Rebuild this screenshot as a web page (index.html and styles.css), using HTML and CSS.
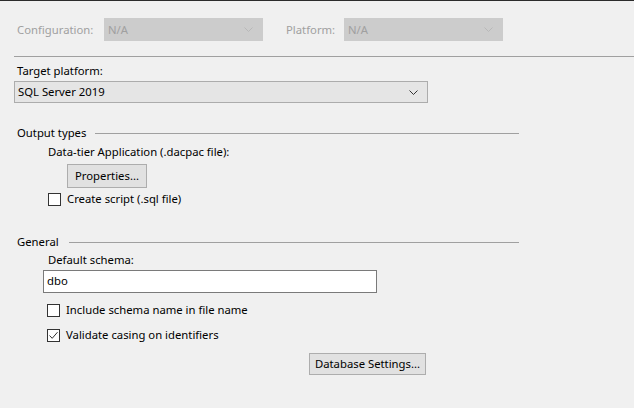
FILE: index.html
```html
<!DOCTYPE html>
<html>
<head>
<meta charset="utf-8">
<link rel="stylesheet" href="styles.css">
</head>
<body>
<div class="page">
  <div class="toprow">
    <span class="dlabel cfg-label">Configuration:</span>
    <div class="combo disabled cfg-combo"><span>N/A</span>
      <svg class="chev" width="9" height="5" viewBox="0 0 9 5"><path d="M0.5 0.5 L4.5 4.5 L8.5 0.5" fill="none" stroke="#b8b8b8" stroke-width="1"/></svg>
    </div>
    <span class="dlabel plat-label">Platform:</span>
    <div class="combo disabled plat-combo"><span>N/A</span>
      <svg class="chev" width="9" height="5" viewBox="0 0 9 5"><path d="M0.5 0.5 L4.5 4.5 L8.5 0.5" fill="none" stroke="#b8b8b8" stroke-width="1"/></svg>
    </div>
  </div>
  <div class="sep"></div>

  <div class="label target-label">Target platform:</div>
  <div class="combo target-combo"><span>SQL Server 2019</span>
    <svg class="chev" width="9" height="5" viewBox="0 0 9 5"><path d="M0.5 0.5 L4.5 4.5 L8.5 0.5" fill="none" stroke="#333" stroke-width="1"/></svg>
  </div>

  <div class="group-head out-head"><span class="label">Output types</span><span class="gline"></span></div>
  <div class="label indent sub">Data-tier Application (.dacpac file):</div>
  <button class="btn props-btn">Properties...</button>
  <label class="check create-check"><span class="box"></span><span>Create script (.sql file)</span></label>

  <div class="group-head gen-head"><span class="label">General</span><span class="gline"></span></div>
  <div class="label indent schema-label">Default schema:</div>
  <div class="textbox">dbo</div>
  <label class="check inc-check"><span class="box"></span><span>Include schema name in file name</span></label>
  <label class="check val-check"><span class="box checked"><svg width="11" height="11" viewBox="0 0 11 11"><path d="M1.5 5.5 L4.2 8.3 L9.5 2.2" fill="none" stroke="#333" stroke-width="1"/></svg></span><span>Validate casing on identifiers</span></label>
  <div class="btnrow"><button class="btn db-btn">Database Settings...</button></div>
</div>
</body>
</html>
```

FILE: styles.css
```css
html, body {
  margin: 0;
  padding: 0;
}
body {
  background: #f0f0f0;
  font-family: "Noto Sans", "Open Sans", sans-serif;
  font-size: 11.3px;
  color: #000;
  width: 634px;
  height: 408px;
  overflow: hidden;
}
.page {
  border-top: 1px solid #2b2b2b;
  height: 407px;
  display: flex;
  flex-direction: column;
  align-items: flex-start;
}
.label, .dlabel {
  line-height: 16px;
  white-space: nowrap;
}
.dlabel {
  color: #a0a0a0;
}
.toprow {
  margin-top: 17px;
  display: flex;
  align-items: center;
  height: 23px;
}
.cfg-label { margin-left: 17px; width: 87px; }
.plat-label { margin-left: 23px; width: 58px; }
.combo {
  box-sizing: border-box;
  display: flex;
  align-items: center;
  justify-content: space-between;
  padding: 0 9px 0 3px;
  line-height: 16px;
}
.combo.disabled {
  background: #cccccc;
  color: #a0a0a0;
  height: 23px;
  border: 1px solid #cccccc;
}
.cfg-combo { width: 159px; }
.plat-combo { width: 159px; }
.sep {
  margin-top: 15px;
  margin-left: 14px;
  align-self: stretch;
  border-top: 1px solid #a0a0a0;
}
.target-label {
  margin-top: 6px;
  margin-left: 17px;
}
.target-combo {
  margin-top: 2px;
  margin-left: 14px;
  width: 414px;
  height: 22px;
  background: #e5e5e5;
  border: 1px solid #acacac;
}
.group-head {
  display: flex;
  align-items: center;
  margin-left: 17px;
  width: 502px;
}
.gline {
  flex: 1;
  border-top: 1px solid #a0a0a0;
}
.out-head { margin-top: 22px; }
.out-head .gline { margin-left: 9px; }
.gen-head { margin-top: 27px; }
.gen-head .gline { margin-left: 10px; }
.indent { margin-left: 48px; }
.sub { margin-top: 3px; }
.btn {
  box-sizing: border-box;
  font-family: inherit;
  font-size: 11.3px;
  color: #000;
  background: #e1e1e1;
  border: 1px solid #adadad;
  padding: 0;
  line-height: 16px;
}
.props-btn {
  margin-top: 4px;
  margin-left: 67px;
  width: 80px;
  height: 24px;
}
.check {
  display: flex;
  align-items: center;
  line-height: 16px;
  white-space: nowrap;
}
.box {
  box-sizing: border-box;
  width: 13px;
  height: 13px;
  border: 1px solid #333;
  background: #fff;
  margin-right: 6px;
  display: flex;
  align-items: center;
  justify-content: center;
}
.create-check { margin-top: 3px; margin-left: 48px; }
.schema-label { margin-top: 2px; }
.textbox {
  box-sizing: border-box;
  margin-top: 2px;
  margin-left: 43px;
  width: 334px;
  height: 23px;
  background: #fff;
  border: 1px solid #7a7a7a;
  padding-left: 3px;
  line-height: 20px;
}
.inc-check { margin-top: 9px; margin-left: 47px; }
.val-check { margin-top: 9px; margin-left: 47px; }
.btnrow {
  margin-top: 10px;
  margin-left: 309px;
}
.db-btn {
  width: 117px;
  height: 22px;
}
```
